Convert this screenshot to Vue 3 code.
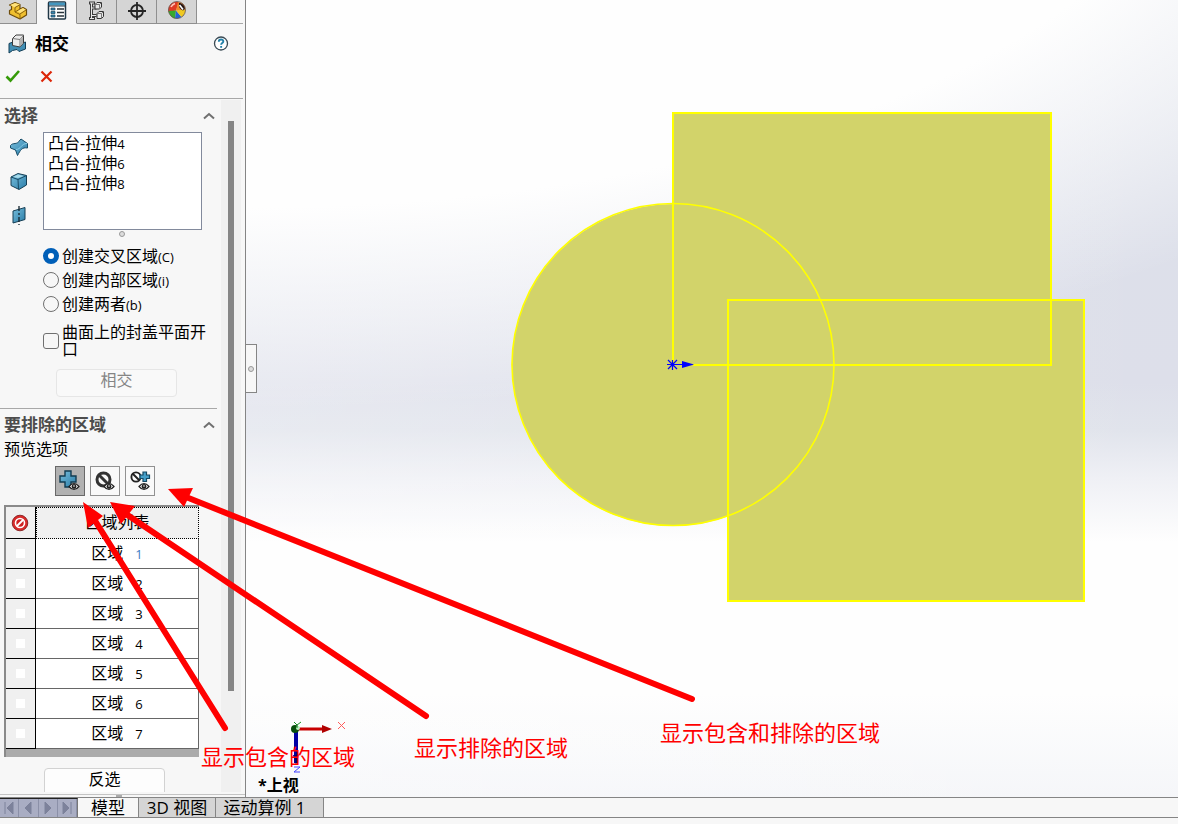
<script setup>
import { ref } from 'vue'

const bodies = ref([
  { name: '凸台-拉伸', no: 4 },
  { name: '凸台-拉伸', no: 6 },
  { name: '凸台-拉伸', no: 8 },
])
const modes = [
  { value: 'c', label: '创建交叉区域', key: '(C)' },
  { value: 'i', label: '创建内部区域', key: '(i)' },
  { value: 'b', label: '创建两者', key: '(b)' },
]
const mode = ref('c')
const cap = ref(false)
const preview = ref('included')
const regions = ref([1, 2, 3, 4, 5, 6, 7].map((no) => ({ no, excluded: false })))

function invert() {
  regions.value.forEach((r) => { r.excluded = !r.excluded })
}
</script>

<template>
  <div class="app">
    <main class="work">
      <aside class="panel">
        <nav class="tabs">
          <button class="tab first" aria-label="设计树">
            <svg width="20" height="22" viewBox="0 0 20 22"><path d="M1.500 5L7 2.500l5 2V9l3-1.500 3.500 2V15L12 19 1.500 14v-3.500l2-1V6z" fill="#f0c02f" stroke="#6d4c0c" stroke-width="1.200" stroke-linejoin="round" /><path d="M2 5l5 2.500 5-3-5-1.500z" fill="#ffe27a" /><path d="M12 13l-3-2 3-1.500 3-1.500 3 2z" fill="#ffe27a" /><path d="M7 7.500V12l5 2.500V19M12 14l6-4M7 7.500l4.500-2.500M7 12l5-3" fill="none" stroke="#8a620f" /></svg>
          </button>
          <button class="tab active" aria-label="属性">
            <svg width="20" height="20" viewBox="0 0 20 20"><rect x="1.500" y="2" width="17" height="17" rx="1" fill="#fff" stroke="#203746" stroke-width="1.500" /><path d="M2 2.500h16v3H2z" fill="#4496be" /><path d="M2 6h16" stroke="#203746" /><path d="M4 8h4v2H4zM4 11.500h4v2H4zM4 15h4v2H4z" fill="#3684ae" stroke="#17465f" stroke-width=".7" /><path d="M10 9h7M10 12.500h7M10 16h7" stroke="#29343b" stroke-width="1.300" /></svg>
          </button>
          <button class="tab" aria-label="配置">
            <svg width="18" height="22" viewBox="0 0 18 22"><path d="M1 3h6M1 18.500h6M3.500 3v15M3.500 8h5M3.500 15.500h5" stroke="#3c3c3c" stroke-width="3" fill="none" /><path d="M2 3h4M2 18.500h4M3.500 3v15M3.500 8h5M3.500 15.500h5" stroke="#e8e8e8" stroke-width="1" fill="none" /><g fill="#e6e6e6" stroke="#333" stroke-linejoin="round"><path d="M7 4.500l2-2h4.500V7l-2 2H7zM9 13.500l2-2h4.500v5l-2 2H9z" /><path d="M7 4.500h4.500l2-2M11.500 4.500V9M9 13.500h4.500l2-2M13.500 13.500v5" fill="none" stroke="#777" /></g></svg>
          </button>
          <button class="tab" aria-label="尺寸">
            <svg width="20" height="20" viewBox="0 0 20 20"><g fill="none" stroke="#252525" stroke-width="1.800"><circle cx="10" cy="11" r="6" /><path d="M10 2v18M1 11h18" /></g></svg>
          </button>
          <button class="tab" aria-label="外观">
            <svg width="20" height="20" viewBox="0 0 20 20"><path d="M9 10.500L1.500 12A8.500 8.500 0 0 1 12 2z" fill="#df3a25" /><path d="M9 10.500L1.500 11C2 15 5 18 8 18.500z" fill="#37aa2d" /><path d="M9 10.500l-1 8c3 .3 5-.5 6.500-1.500z" fill="#2563cf" /><path d="M9 10.500l9.500-1.500c0 4-1.500 6.500-4 8z" fill="#f0c922" /><path d="M9 10.500L11 2c4 0 7.500 3 7.500 7.500z" fill="#f08a2c" /><path d="M12 3c3 0 6 2.500 6 6l-2 1.500c-3-1-4.500-3-4-7.500z" fill="#241514" /><path d="M12.500 5l3.500 4.500" stroke="#fff" stroke-width="1.600" /><path d="M4 7c1-2 2.500-3 4-3.500" stroke="#ffc4b8" stroke-width="1.600" fill="none" /><circle cx="10" cy="10" r="8.500" fill="none" stroke="#665650" stroke-width=".8" /></svg>
          </button>
          <span class="tabs-rest"></span>
        </nav>

        <header class="title">
          <svg width="20" height="20" viewBox="0 0 20 20"><path d="M2 9.500L6 8l3 3 9.500-3v7L12 17.500l-2-2-4.500 1L2 19z" fill="#428eb4" stroke="#123e56" stroke-linejoin="round" /><path d="M5.500 4.500L9 1h7.500v8L13 13l-7.500-1.500z" fill="#ececec" stroke="#3c3c3c" stroke-linejoin="round" /><path d="M5.500 4.500l7.500 1V13M13 5.500L16.500 1.500" fill="none" stroke="#777" /><path d="M13.500 6l2.500-3v6l-2.500 3z" fill="#b0b0b0" /></svg>
          <h1>相交</h1>
          <button class="plain help" aria-label="帮助">
            <svg width="16" height="16" viewBox="0 0 16 16"><circle cx="8" cy="7.500" r="6.500" fill="#fff" stroke="#3a4a54" stroke-width="1.300" /><path d="M5.800 5.800c0-3 4.700-2.900 4.500-.2-.1 1.500-2.200 1.500-2.200 3.200" fill="none" stroke="#2481a9" stroke-width="1.900" /><path d="M7.200 10h1.900v1.800H7.200z" fill="#2481a9" /></svg>
          </button>
        </header>
        <div class="actions">
          <button class="plain" aria-label="确定"><svg width="16" height="14" viewBox="0 0 16 14"><path d="M1.500 7.500l4 4L14 2" fill="none" stroke="#359a08" stroke-width="2.600" /></svg></button>
          <button class="plain" aria-label="取消"><svg width="14" height="14" viewBox="0 0 14 14"><path d="M2.500 2.500l10 10M12.500 2.500l-10 10" stroke="#dc2608" stroke-width="2.200" /></svg></button>
        </div>

        <div class="scroller">
          <div class="content">
            <section class="select">
              <h2>选择<svg width="12" height="8" viewBox="0 0 12 8"><path d="M1 6.500L6 2l5 4.500" fill="none" stroke="#707070" stroke-width="2" /></svg></h2>
              <div class="pick">
                <div class="kinds">
                  <svg width="20" height="20" viewBox="0 0 20 20"><defs><linearGradient id="blue" x2="1" y2="1"><stop stop-color="#79bedb" /><stop offset="1" stop-color="#297da9" /></linearGradient></defs><path d="M1.500 8.500C4 5 8 8.500 11 3l1-1 6.500 4.500V11C13 10 11.500 13 8.500 18.500L6.500 13 1.500 11z" fill="url(#blue)" stroke="#174c68" stroke-linejoin="round" /><path d="M7 12.500c5 0 5-6 11-6" fill="none" stroke="#8ccde5" /></svg>
                  <svg width="20" height="20" viewBox="0 0 20 20"><path d="M2 6l7-3.500 8.500 2V14L10 18.500l-8-4z" fill="url(#blue)" stroke="#163f55" stroke-linejoin="round" /><path d="M4 6l5-2.500 6 1.500-6 2z" fill="#a6dbec" /><path d="M2 6l7 2.500 8.500-4M9 8.500l.5 9.500" fill="none" stroke="#174a65" /></svg>
                  <svg width="20" height="20" viewBox="0 0 20 20"><path d="M4 6l12-3.500v12L4 18z" fill="url(#blue)" stroke="#163f55" /><path d="M10 1v19" stroke="#16262e" stroke-width="1.300" stroke-dasharray="5 2 2 2" /></svg>
                </div>
                <ul class="bodies">
                  <li v-for="b in bodies" :key="b.no">{{ b.name }}<small>{{ b.no }}</small></li>
                </ul>
              </div>
              <span class="grip"></span>
              <div class="options">
                <label v-for="m in modes" :key="m.value"><input v-model="mode" type="radio" name="mode" :value="m.value"><span>{{ m.label }}<small>{{ m.key }}</small></span></label>
                <label class="cap"><input v-model="cap" type="checkbox"><span>曲面上的封盖平面开口</span></label>
              </div>
              <button class="push intersect" disabled>相交</button>
            </section>

            <section class="exclude">
              <h2>要排除的区域<svg width="12" height="8" viewBox="0 0 12 8"><path d="M1 6.500L6 2l5 4.500" fill="none" stroke="#707070" stroke-width="2" /></svg></h2>
              <p>预览选项</p>
              <div class="previews">
                <button :class="{ on: preview === 'included' }" aria-label="显示包含的区域" @click="preview = 'included'">
                  <svg width="24" height="24" viewBox="0 0 24 24"><path d="M7 2h6v5h5v6h-5v5H7v-5H2V7h5z" fill="url(#blue)" stroke="#123c52" stroke-width="1.400" /><path d="M11 17.500q5-6 10 0-5 6-10 0z" fill="#fff" stroke="#222" stroke-width="1.200" /><circle cx="16" cy="17.500" r="2.400" fill="#222" /><circle cx="16" cy="17" r=".8" fill="#fff" /></svg>
                </button>
                <button :class="{ on: preview === 'excluded' }" aria-label="显示排除的区域" @click="preview = 'excluded'">
                  <svg width="24" height="24" viewBox="0 0 24 24"><circle cx="10.500" cy="10.500" r="6.500" fill="none" stroke="#333" stroke-width="3" /><path d="M6 6l9 9" stroke="#333" stroke-width="3" /><path d="M11 17.500q5-6 10 0-5 6-10 0z" fill="#fff" stroke="#222" stroke-width="1.200" /><circle cx="16" cy="17.500" r="2.400" fill="#222" /><circle cx="16" cy="17" r=".8" fill="#fff" /></svg>
                </button>
                <button :class="{ on: preview === 'both' }" aria-label="显示包含和排除的区域" @click="preview = 'both'">
                  <svg width="24" height="24" viewBox="0 0 24 24"><circle cx="8" cy="8" r="4.600" fill="#fff" stroke="#222" stroke-width="1.900" /><path d="M5 5l6 6" stroke="#222" stroke-width="1.900" /><path d="M15 3h3.500v3h3v3.500h-3v3H15v-3h-3V6h3z" fill="#459fc8" stroke="#164963" stroke-width="1.200" /><path d="M11 17.500q5-6 10 0-5 6-10 0z" fill="#fff" stroke="#222" stroke-width="1.200" /><circle cx="16" cy="17.500" r="2.400" fill="#222" /><circle cx="16" cy="17" r=".8" fill="#fff" /></svg>
                </button>
              </div>
              <div class="grid">
                <table>
                  <thead>
                    <tr>
                      <th class="mark"><svg width="18" height="18" viewBox="0 0 18 18"><circle cx="9" cy="9" r="7.800" fill="#d92b2b" stroke="#711" stroke-width=".8" /><circle cx="9" cy="9" r="4.500" fill="#cf2020" stroke="#fff" stroke-width="1.600" /><path d="M6 12l6-6" stroke="#fff" stroke-width="1.800" /></svg></th>
                      <th class="name">区域列表</th>
                    </tr>
                  </thead>
                  <tbody>
                    <tr v-for="r in regions" :key="r.no">
                      <td class="mark"><input :id="'region-' + r.no" v-model="r.excluded" type="checkbox"></td>
                      <td class="name"><label :for="'region-' + r.no">区域<small :class="{ hot: r.no === 1 }">{{ r.no }}</small></label></td>
                    </tr>
                  </tbody>
                </table>
              </div>
              <button class="push invert" @click="invert">反选</button>
            </section>
          </div>
          <div class="track"><div class="thumb"></div></div>
        </div>
        <div class="splitter"><span></span></div>
      </aside>

      <section class="view">
        <svg class="model">
          <g fill="#d2d36a">
            <rect x="427" y="113" width="378" height="252" />
            <circle cx="427" cy="365" r="161" />
            <rect x="482" y="300" width="356" height="301" />
          </g>
          <g fill="none" stroke="#ff0" stroke-width="2">
            <rect x="427" y="113" width="378" height="252" />
            <circle cx="427" cy="364.500" r="161" stroke-width="1.600" />
            <rect x="482" y="300" width="356" height="301" />
          </g>
          <path d="M427 364.500h20" stroke="#d2d36a" stroke-width="3" />
          <path d="M421 364.500h16M426.500 360v10M422 360l9 9M431 360l-9 9" stroke="#00f" stroke-width="1.200" />
          <path d="M436 361l12 3.500-12 3.500z" fill="#00f" />
          <g>
            <path d="M50 729v34" stroke="#0000a4" stroke-width="4" />
            <path d="M47 755h6l-3 10z" fill="#000078" />
            <path d="M51 729h26" stroke="#c80000" stroke-width="3" />
            <path d="M76 725l10 4-10 4z" fill="#b00000" />
            <circle cx="49" cy="729" r="4" fill="#074f0c" />
            <circle cx="52" cy="728" r="2" fill="#b8f0be" />
            <g fill="none" stroke-width="1">
              <path d="M48 722l3 3 4-3M51 725v3" stroke="#168c22" />
              <path d="M92 722l7 7M99 722l-7 7" stroke="#ff5a5a" />
              <path d="M48 767h6l-6 5h6" stroke="#4444ff" />
            </g>
          </g>
          <text x="12" y="791" class="view-name">*上视</text>
        </svg>
        <button class="handle" aria-label="收起面板"><span></span></button>
      </section>
    </main>

    <footer class="sheets">
      <div class="steps">
        <button aria-label="第一个"><svg width="12" height="14" viewBox="0 0 12 14"><path d="M2 1v12M10 1L4 7l6 6z" fill="#7d829b" stroke="#7d829b" /></svg></button>
        <button aria-label="上一个"><svg width="12" height="14" viewBox="0 0 12 14"><path d="M9 1L3 7l6 6z" fill="#7d829b" stroke="#7d829b" /></svg></button>
        <button aria-label="下一个"><svg width="12" height="14" viewBox="0 0 12 14"><path d="M3 1l6 6-6 6z" fill="#7d829b" stroke="#7d829b" /></svg></button>
        <button aria-label="最后一个"><svg width="12" height="14" viewBox="0 0 12 14"><path d="M10 1v12M2 1l6 6-6 6z" fill="#7d829b" stroke="#7d829b" /></svg></button>
      </div>
      <button class="sheet current">模型</button>
      <button class="sheet">3D 视图</button>
      <button class="sheet wide">运动算例 1</button>
    </footer>

    <svg class="notes">
      <g stroke="#f00" stroke-width="6" stroke-linecap="round">
        <path d="M225 728L94 519" />
        <path d="M426 716L126 514" />
        <path d="M692 699L186 497" />
      </g>
      <g fill="#f00">
        <path d="M83 502l20 14-15 12z" />
        <path d="M110 502l25 4-14 18z" />
        <path d="M168 489l25-1-9 19z" />
        <text x="201" y="765">显示包含的区域</text>
        <text x="414" y="756">显示排除的区域</text>
        <text x="660" y="741">显示包含和排除的区域</text>
      </g>
    </svg>
  </div>
</template>

<style>
body { margin: 0; overflow: hidden; }
</style>

<style scoped>
.app {
  position: relative;
  display: flex;
  flex-direction: column;
  height: 100vh;
  background: #f7f7f7;
  color: #000;
  font: 16px/20px "Open Sans", "Noto Sans CJK SC", sans-serif;
}
.app *, .app *::before { box-sizing: border-box; }
button, input { margin: 0; padding: 0; font: inherit; color: inherit; }
h1, h2, p, ul { margin: 0; padding: 0; font-size: 17px; }
small { font-size: 13px; line-height: 1; }
svg { display: block; flex: none; }

.work { display: flex; flex: 1; min-height: 0; }
.panel {
  display: flex;
  flex-direction: column;
  width: 246px;
  border-right: 1px solid #858585;
  background: #f7f7f7;
}
.tabs { display: flex; height: 24px; margin-right: 2px; }
.tab {
  display: flex;
  justify-content: center;
  width: 40px;
  border: 0 solid #8f8f8f;
  border-width: 0 1px 1px 0;
  background: #d5d5d5;
  overflow: hidden;
}
.tab.first { width: 37px; }
.tab.active { background: #f7f7f7; border-bottom-color: #f7f7f7; }
.tabs-rest { flex: 1; border-bottom: 1px solid #a8a8a8; }
.title { display: flex; align-items: center; gap: 8px; height: 40px; padding: 0 16px 0 7px; }
.title h1 { flex: 1; font-weight: 700; }
.plain { display: flex; border: 0; background: none; }
.actions {
  display: flex;
  align-items: center;
  gap: 18px;
  height: 35px;
  margin-right: 2px;
  padding: 0 5px 10px;
  border-bottom: 1px solid #a8a8a8;
}

.scroller { display: flex; flex: 1; min-height: 0; margin: 1px 4px 2px 0; overflow: hidden; }
.content { flex: 1; overflow: hidden; }
.track { width: 20px; padding: 21px 6px 0 7px; background: #f0f0f0; }
.thumb { height: 570px; width: 6px; background: #858585; }
section h2 {
  display: flex;
  justify-content: space-between;
  align-items: center;
  height: 32px;
  padding: 0 6px 0 4px;
  color: #4c4c4c;
  font-weight: 700;
}
.pick { display: flex; }
.kinds { display: flex; flex-direction: column; gap: 14px; width: 43px; padding: 5px 0 0 9px; }
.bodies {
  width: 159px;
  height: 98px;
  padding: 0 4px;
  border: 1px solid #828a9c;
  background: #fff;
  list-style: none;
  font-size: 16px;
}
.bodies li { height: 20px; }
.grip, .handle span {
  display: block;
  width: 6px;
  height: 6px;
  border: 1px solid #999;
  border-radius: 50%;
  background: #ddd;
}
.grip { margin: 1px 0 0 119px; }
.options { display: flex; flex-direction: column; gap: 4px; padding: 9px 12px 0 43px; }
.options label { display: flex; align-items: center; gap: 3px; }
.options input {
  flex: none;
  width: 16px;
  height: 16px;
  border: 1px solid #707070;
  background: #f7f7f7;
  appearance: none;
}
.options input[type="radio"] { border-radius: 50%; }
.options input[type="radio"]:checked { border: 5px solid #005fb8; background: #fff; }
.options input[type="checkbox"] { border-radius: 3px; }
.options input[type="checkbox"]:checked { background: #005fb8; }
.options .cap { margin-top: 6px; line-height: 17px; }
.push { display: block; width: 121px; border: 1px solid #d2d2d2; border-radius: 4px; background: #fdfdfd; }
.intersect { height: 28px; margin: 11px 0 11px 56px; padding-bottom: 6px; border-color: #e6e6e6; background: #f9f9f9; color: #858585; }
.exclude { border-top: 1px solid #a8a8a8; margin-right: 4px; }
.exclude h2 { padding-right: 2px; }
.exclude p { padding-left: 4px; font-size: 16px; line-height: 16px; }
.previews { display: flex; gap: 5px; padding: 9px 0 9px 55px; }
.previews button {
  display: flex;
  align-items: center;
  justify-content: center;
  width: 30px;
  height: 30px;
  border: 1px solid #919191;
  background: #f9f9f9;
}
.previews button.on { border-color: #686868; background: #b1b1b1; }
.grid {
  width: 195px;
  margin-left: 4px;
  padding-bottom: 8px;
  border: solid #8a8a8a;
  border-width: 2px 0 0 2px;
  background: #ababab;
}
table { width: 193px; border-collapse: separate; border-spacing: 0; table-layout: fixed; background: #fff; }
tr { height: 30px; }
thead tr { height: 32px; }
th { font-weight: 400; background: #f0f0f0; }
th, td { padding: 0; }
.mark { width: 30px; border: solid #000; border-width: 0 1px 1px 0; background: #f0f0f0; }
th.mark svg { margin-left: 5px; }
td.mark input { display: block; width: 9px; height: 9px; margin-left: 10px; background: #fff; appearance: none; }
td.mark input:checked { background: #d92b2b; }
.name { padding-bottom: 2px; border: solid #666; border-width: 0 1px 1px 0; text-align: center; }
th.name { border: 1px dotted #000; }
td small { display: inline-block; margin-left: 12px; }
.hot { color: #3d7cc4; }
.invert { height: 28px; margin: 11px 0 0 44px; padding-bottom: 6px; }
.splitter { height: 3px; border-top: 1px solid #c4c4c4; padding-left: 116px; }
.splitter span { display: block; width: 6px; height: 2px; background: #aaa; }

.view {
  position: relative;
  flex: 1;
  min-width: 0;
  background:
    radial-gradient(102% 51% at 0 -25%, #fefefe 100%, #fefefe00 150%),
    linear-gradient(90deg, #ffffff40, #fff0),
    linear-gradient(#dde1ea 0, #dddfea 48%, #e1e4ec 54%, #eff0f5 60%, #fefefe 68%, #fefefe 87%, #f5f6f9 100%);
}
.model { width: 100%; height: 100%; }
.view-name { font-size: 16px; font-weight: 700; }
.handle {
  position: absolute;
  left: 0;
  top: 344px;
  display: flex;
  align-items: center;
  justify-content: center;
  width: 11px;
  height: 49px;
  border: solid #858585;
  border-width: 1px 1px 1px 0;
  background: #f7f7f7;
}

.sheets {
  display: flex;
  height: 21px;
  margin-bottom: 6px;
  border: solid #858585;
  border-width: 1px 0;
  font-size: 17px;
  line-height: 18px;
}
.steps { display: flex; width: 78px; border-right: 1px solid #777; border-top: 1px solid #222; background: #a9aec4; }
.steps button {
  display: flex;
  flex: 1;
  align-items: center;
  justify-content: center;
  border: solid #8b90a8;
  border-width: 0 1px 0 0;
  background: #a9adc3;
}
.sheet { width: 77px; border: 0; border-right: 1px solid #858585; background: #d5d5d5; white-space: nowrap; }
.sheet.current { width: 61px; background: #f7f7f7; }
.sheet.wide { width: 108px; padding-right: 10px; }

.notes { position: absolute; inset: 0; width: 100%; height: 100%; pointer-events: none; font-size: 22px; }
</style>
